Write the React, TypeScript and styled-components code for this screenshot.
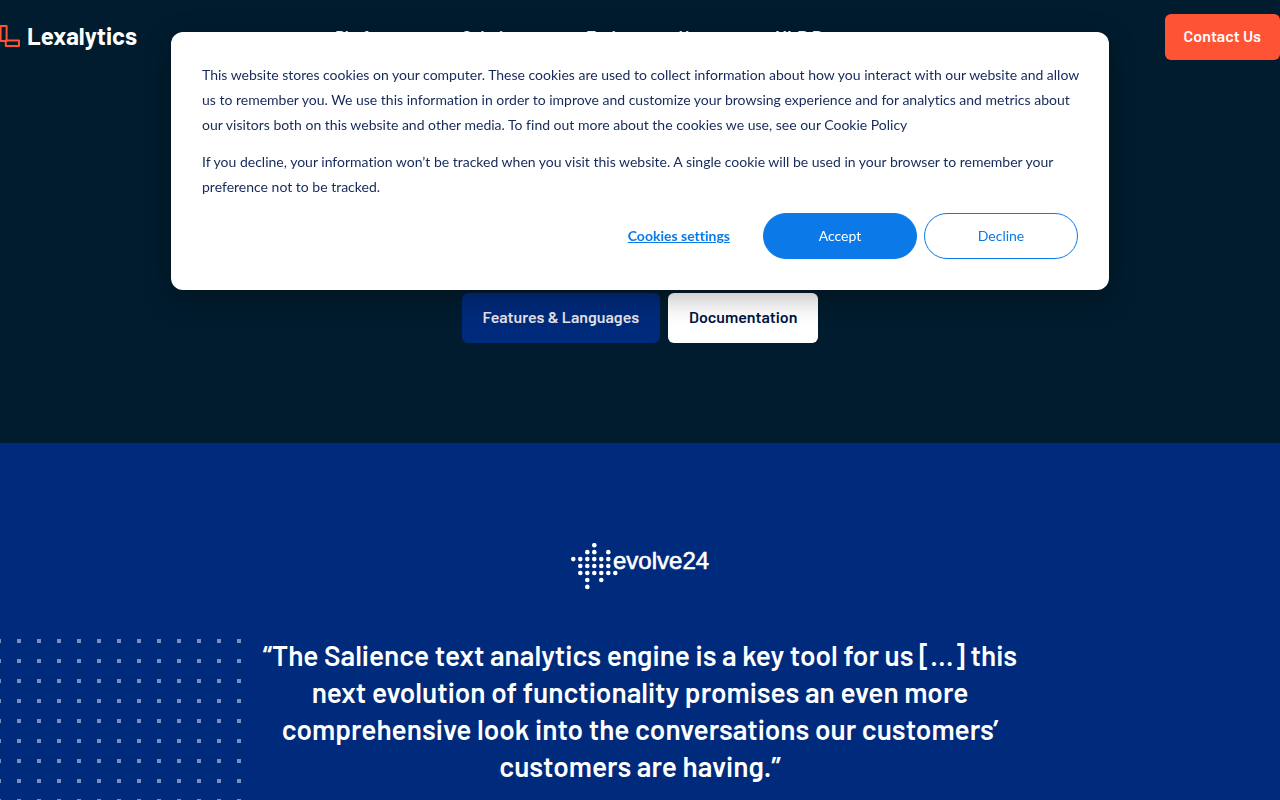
import React from "react";
import styled, { createGlobalStyle } from "styled-components";

const GlobalStyle = createGlobalStyle`
  *, *::before, *::after { box-sizing: border-box; }
  body { margin: 0; background: #002a7b; color: #fff; font-family: "Barlow", Roboto, "Liberation Sans", sans-serif; }
  p { margin: 0; }
`;

const Page = styled.div`
  min-height: 100vh;
  overflow: hidden;
`;

const Hero = styled.div`
  display: flex;
  flex-direction: column;
  background: #001c2e;
`;

const Header = styled.header`
  display: flex;
  align-items: center;
  justify-content: space-between;
  padding: 14px 0;
`;

const Logo = styled.a`
  display: flex;
  color: #fff;
  text-decoration: none;
`;

const Nav = styled.nav`
  display: flex;
  align-items: center;
  gap: 58px;
  padding: 0 112px 2px 0;
`;

const NavLink = styled.a<{ $large?: boolean }>`
  color: #fff;
  font-size: ${(p) => (p.$large ? "18px" : "16px")};
  line-height: 20px;
  font-weight: 600;
  text-decoration: none;
`;

const ContactLink = styled.a`
  padding: 11px 19px 13px;
  border-radius: 6px;
  background: #ff5335;
  color: #fff;
  font-size: 16px;
  line-height: 22px;
  font-weight: 600;
  text-decoration: none;
`;

const HeroActions = styled.div`
  display: flex;
  justify-content: center;
  gap: 8px;
  padding: 219px 0 100px;
`;

const HeroLink = styled.a<{ $light?: boolean }>`
  padding: 13px 21px 15px;
  border-radius: 6px;
  background: ${(p) => (p.$light ? "#fff" : "#002a7b")};
  color: ${(p) => (p.$light ? "#001240" : "#e4e4ea")};
  font-size: 16px;
  line-height: 22px;
  font-weight: 600;
  text-decoration: none;
`;

const Testimonial = styled.section`
  position: relative;
  display: flex;
  flex-direction: column;
  align-items: center;
  gap: 46px;
  padding: 100px 24px;
`;

const DotPattern = styled.div`
  position: absolute;
  left: 0;
  top: 196px;
  bottom: 0;
  width: 241px;
  background: conic-gradient(from 90deg at 16px 16px, #7a8fba 25%, transparent 0) 1px -16px / 20px 20px;
`;

const Quote = styled.blockquote`
  position: relative;
  max-width: 780px;
  margin: 0;
  font-size: 28px;
  line-height: 37px;
  font-weight: 600;
  text-align: center;
`;

const CookieDialog = styled.section`
  position: fixed;
  z-index: 2;
  top: 32px;
  left: 0;
  right: 0;
  display: flex;
  flex-direction: column;
  gap: 14px;
  width: calc(100% - 342px);
  max-width: 938px;
  margin: 0 auto;
  padding: 30px 20px 31px 31px;
  border-radius: 12px;
  background: #fff;
  box-shadow: 0 8px 28px rgba(0, 0, 0, 0.28);
  color: #15295a;
  font-family: Lato, "Liberation Sans", sans-serif;
  font-size: 14px;
  font-variant-ligatures: none;
`;

const CookieCopy = styled.div`
  display: flex;
  flex-direction: column;
  gap: 12px;
  line-height: 25px;
`;

const CookieActions = styled.div`
  display: flex;
  justify-content: flex-end;
  gap: 7px;
  padding-right: 11px;
`;

const CookieButton = styled.button<{ $kind: "link" | "solid" | "outline" }>`
  width: ${(p) => (p.$kind === "link" ? "auto" : "154px")};
  height: 46px;
  padding: 0;
  margin-right: ${(p) => (p.$kind === "link" ? "25px" : "0")};
  border: 1px solid ${(p) => (p.$kind === "link" ? "transparent" : "#0b7ae8")};
  border-radius: 23px;
  background: ${(p) => (p.$kind === "solid" ? "#0b7ae8" : "transparent")};
  color: ${(p) => (p.$kind === "solid" ? "#fff" : "#0b7ae8")};
  font: ${(p) => (p.$kind === "link" ? 700 : 400)} 14px/20px Lato, "Liberation Sans", sans-serif;
  font-variant-ligatures: none;
  text-decoration: ${(p) => (p.$kind === "link" ? "underline" : "none")};
  cursor: pointer;
`;

const evolveDots: Array<[number, number]> = [
  [3, 0],
  [2, 1], [3, 1], [5, 1],
  [0, 2], [1, 2], [2, 2], [3, 2], [4, 2], [5, 2],
  [1, 3], [2, 3], [3, 3], [4, 3], [5, 3],
  [1, 4], [2, 4], [3, 4], [4, 4], [5, 4], [6, 4],
  [2, 5], [4, 5],
  [2, 6],
];

function LexalyticsLogo() {
  return (
    <svg width="140" height="34" viewBox="0 0 140 34" role="img" aria-label="Lexalytics">
      <g fill="none" stroke="#ff5335" strokeWidth="2" strokeLinejoin="round">
        <path d="M0.6 6H6.6V21H0.6Z" />
        <path d="M5.8 20.6H19V26H5.8Z" />
      </g>
      <text x="27" y="25" fill="#fff" fontFamily="Barlow, Roboto, sans-serif" fontSize="24" fontWeight="700">Lexalytics</text>
    </svg>
  );
}

function EvolveLogo() {
  return (
    <svg width="140" height="48" viewBox="0 0 140 48" role="img" aria-label="evolve24" fill="#fff">
      {evolveDots.map(([c, r]) => (
        <circle key={`${c}-${r}`} cx={3.3 + c * 7} cy={2.2 + r * 6.95} r="2.3" />
      ))}
      <text x="43" y="26" fontFamily="Liberation Sans, sans-serif" fontSize="24" stroke="#fff" strokeWidth="0.6">evolve24</text>
    </svg>
  );
}

const navItems = ["Platforms", "Solutions", "Tech", "News"];

export default function App() {
  return (
    <Page>
      <GlobalStyle />
      <Hero>
        <Header>
          <Logo href="#home"><LexalyticsLogo /></Logo>
          <Nav aria-label="Main">
            {navItems.map((item) => (
              <NavLink key={item} href="#menu">{item}</NavLink>
            ))}
            <NavLink href="#demo" $large>NLP Demo</NavLink>
          </Nav>
          <ContactLink href="#contact">Contact Us</ContactLink>
        </Header>
        <HeroActions>
          <HeroLink href="#features">Features &amp; Languages</HeroLink>
          <HeroLink href="#docs" $light>Documentation</HeroLink>
        </HeroActions>
      </Hero>
      <Testimonial>
        <DotPattern />
        <EvolveLogo />
        <Quote>
          “The Salience text analytics engine is a key tool for us […] this next evolution of functionality promises an even more comprehensive look into the conversations our customers’ customers are having.”
        </Quote>
      </Testimonial>
      <CookieDialog role="dialog" aria-label="Cookie notice">
        <CookieCopy>
          <p>
            This website stores cookies on your computer. These cookies are used to collect information about how you interact with our website and allow us to remember you. We use this information in order to improve and customize your browsing experience and for analytics and metrics about our visitors both on this website and other media. To find out more about the cookies we use, see our Cookie Policy
          </p>
          <p>
            If you decline, your information won’t be tracked when you visit this website. A single cookie will be used in your browser to remember your preference not to be tracked.
          </p>
        </CookieCopy>
        <CookieActions>
          <CookieButton $kind="link">Cookies settings</CookieButton>
          <CookieButton $kind="solid">Accept</CookieButton>
          <CookieButton $kind="outline">Decline</CookieButton>
        </CookieActions>
      </CookieDialog>
    </Page>
  );
}
